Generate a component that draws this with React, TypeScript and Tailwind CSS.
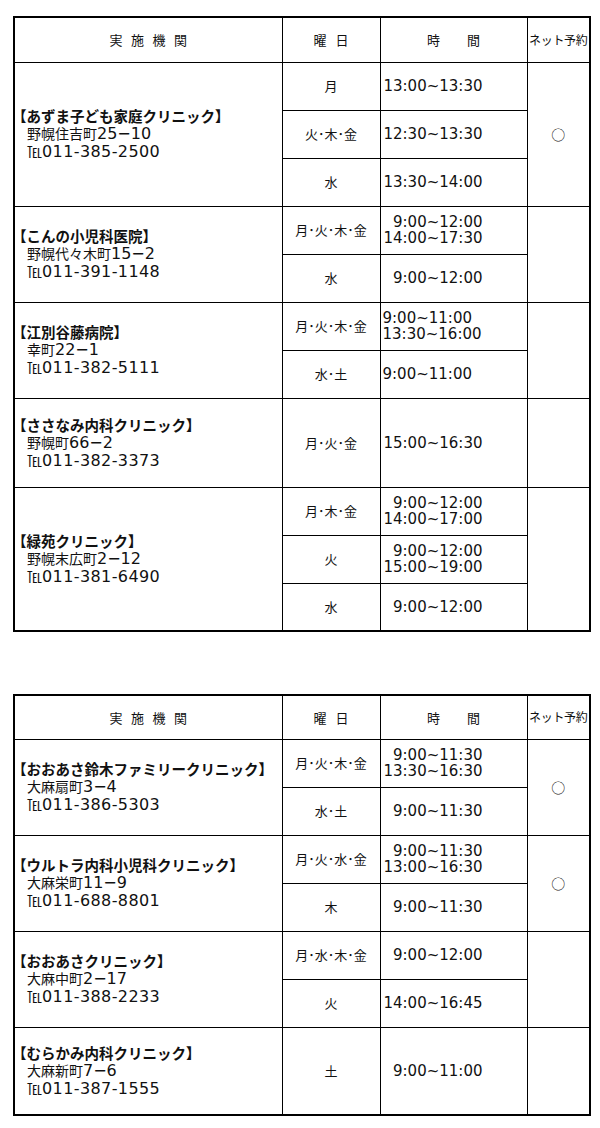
import React from "react"

type Slot = { day: string; times: string[]; left?: boolean }
type Clinic = {
  name: string
  town: string
  no: string
  tel: string
  slots: Slot[]
  net?: boolean
  tall?: string
}

const table1: Clinic[] = [
  {
    name: "あずま子ども家庭クリニック",
    town: "野幌住吉町",
    no: "25−10",
    tel: "011-385-2500",
    net: true,
    slots: [
      { day: "月", times: ["13:00~13:30"] },
      { day: "火･木･金", times: ["12:30~13:30"] },
      { day: "水", times: ["13:30~14:00"] },
    ],
  },
  {
    name: "こんの小児科医院",
    town: "野幌代々木町",
    no: "15−2",
    tel: "011-391-1148",
    slots: [
      { day: "月･火･木･金", times: ["9:00~12:00", "14:00~17:30"] },
      { day: "水", times: ["9:00~12:00"] },
    ],
  },
  {
    name: "江別谷藤病院",
    town: "幸町",
    no: "22−1",
    tel: "011-382-5111",
    slots: [
      { day: "月･火･木･金", times: ["9:00~11:00", "13:30~16:00"], left: true },
      { day: "水･土", times: ["9:00~11:00"], left: true },
    ],
  },
  {
    name: "ささなみ内科クリニック",
    town: "野幌町",
    no: "66−2",
    tel: "011-382-3373",
    tall: "h-[89px]",
    slots: [{ day: "月･火･金", times: ["15:00~16:30"] }],
  },
  {
    name: "緑苑クリニック",
    town: "野幌末広町",
    no: "2−12",
    tel: "011-381-6490",
    slots: [
      { day: "月･木･金", times: ["9:00~12:00", "14:00~17:00"] },
      { day: "火", times: ["9:00~12:00", "15:00~19:00"] },
      { day: "水", times: ["9:00~12:00"] },
    ],
  },
]

const table2: Clinic[] = [
  {
    name: "おおあさ鈴木ファミリークリニック",
    town: "大麻扇町",
    no: "3−4",
    tel: "011-386-5303",
    net: true,
    slots: [
      { day: "月･火･木･金", times: ["9:00~11:30", "13:30~16:30"] },
      { day: "水･土", times: ["9:00~11:30"] },
    ],
  },
  {
    name: "ウルトラ内科小児科クリニック",
    town: "大麻栄町",
    no: "11−9",
    tel: "011-688-8801",
    net: true,
    slots: [
      { day: "月･火･水･金", times: ["9:00~11:30", "13:00~16:30"] },
      { day: "木", times: ["9:00~11:30"] },
    ],
  },
  {
    name: "おおあさクリニック",
    town: "大麻中町",
    no: "2−17",
    tel: "011-388-2233",
    slots: [
      { day: "月･水･木･金", times: ["9:00~12:00"] },
      { day: "火", times: ["14:00~16:45"] },
    ],
  },
  {
    name: "むらかみ内科クリニック",
    town: "大麻新町",
    no: "7−6",
    tel: "011-387-1555",
    tall: "h-[88px]",
    slots: [{ day: "土", times: ["9:00~11:00"] }],
  },
]

function Spaced({ chars, gap }: { chars: string[]; gap: string }) {
  return (
    <div className={`flex justify-center ${gap}`}>
      {chars.map((c) => (
        <span key={c}>{c}</span>
      ))}
    </div>
  )
}

function Schedule({ clinics, headH }: { clinics: Clinic[]; headH: string }) {
  return (
    <table className="table-fixed border-collapse border-2 border-black w-[576px] text-[#111] font-['Noto_Sans_CJK_JP',sans-serif]">
      <colgroup>
        <col className="w-[268px]" />
        <col className="w-[98px]" />
        <col className="w-[147px]" />
        <col className="w-[63px]" />
      </colgroup>
      <thead>
        <tr className={`${headH} text-[13px] leading-none`}>
          <th className="border border-black font-normal">
            <Spaced chars={["実", "施", "機", "関"]} gap="gap-[8.5px]" />
          </th>
          <th className="border border-black font-normal">
            <Spaced chars={["曜", "日"]} gap="gap-[9px]" />
          </th>
          <th className="border border-black font-normal">
            <Spaced chars={["時", "間"]} gap="gap-[27px]" />
          </th>
          <th className="border border-black font-normal text-[12px] whitespace-nowrap tracking-[-0.3px] px-0">
            ネット予約
          </th>
        </tr>
      </thead>
      <tbody>
        {clinics.map((c) =>
          c.slots.map((s, i) => (
            <tr key={c.name + i} className={c.tall ?? "h-[48px]"}>
              {i === 0 && (
                <td rowSpan={c.slots.length} className="border border-black align-middle p-0 pl-[1px]">
                  <div className="-ml-[4px] text-[14.5px] font-bold leading-[16px] whitespace-nowrap">
                    【{c.name}】
                  </div>
                  <div className="pl-[11px] leading-[16px] whitespace-nowrap">
                    <span className="text-[14px]">{c.town}</span>
                    <span className="text-[16px] font-['DejaVu_Sans',sans-serif]">{c.no}</span>
                  </div>
                  <div className="pl-[11px] leading-[16px] whitespace-nowrap">
                    <span className="text-[15px]">℡</span>
                    <span className="text-[16px] tracking-[0.4px] font-['DejaVu_Sans',sans-serif]">{c.tel}</span>
                  </div>
                </td>
              )}
              <td className="border border-black text-center text-[13px] whitespace-nowrap">{s.day}</td>
              <td className="border border-black pl-[2px] font-['DejaVu_Sans',sans-serif] text-[15px] leading-[16px]">
                <div className={s.left ? "" : "w-[100px] text-right"}>
                  {s.times.map((t) => (
                    <div key={t}>{t}</div>
                  ))}
                </div>
              </td>
              {i === 0 && (
                <td rowSpan={c.slots.length} className="border border-black text-center text-[14px]">
                  {c.net ? "○" : ""}
                </td>
              )}
            </tr>
          ))
        )}
      </tbody>
    </table>
  )
}

export default function App() {
  return (
    <div className="bg-white w-[600px] min-h-[1128px] pt-[16px] pl-[13px]">
      <Schedule clinics={table1} headH="h-[45px]" />
      <div className="h-[62px]" />
      <Schedule clinics={table2} headH="h-[44px]" />
    </div>
  )
}
